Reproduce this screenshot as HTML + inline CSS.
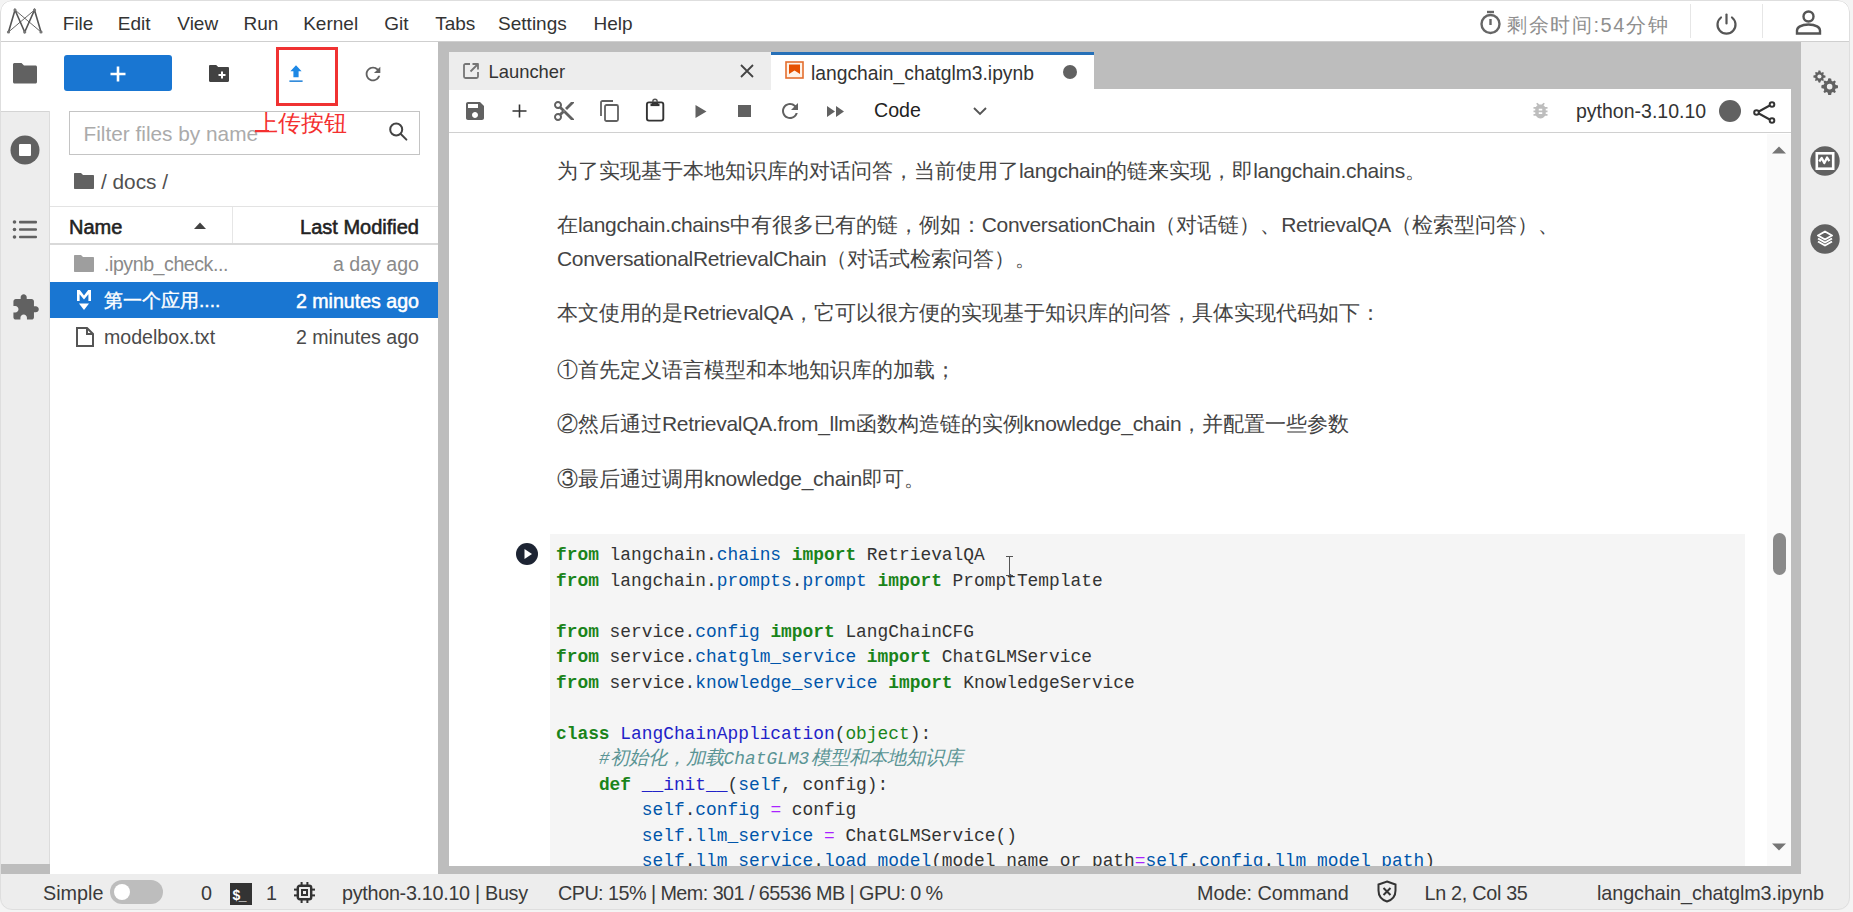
<!DOCTYPE html>
<html><head><meta charset="utf-8">
<style>
*{box-sizing:border-box;margin:0;padding:0}
html,body{width:1853px;height:912px;overflow:hidden;background:#f4f4f4;font-family:"Liberation Sans",sans-serif;color:#333}
.a{position:absolute}
#win{position:absolute;left:0;top:0;width:1850px;height:910px;background:#ededed;border-radius:12px;overflow:hidden}
#frame{position:absolute;left:0;top:0;width:1850px;height:910px;border:1px solid #dedede;border-radius:12px;pointer-events:none}
#top{left:0;top:0;width:1851px;height:42px;background:#fff;border-bottom:1px solid #cfcfcf}
.menu{top:2px;height:42px;line-height:44px;font-size:19px;color:#333}
#lbar{left:0;top:42px;width:50px;height:832px;background:#ededed}
#fb{left:50px;top:42px;width:388px;height:832px;background:#fff}
#split1{left:438px;top:42px;width:11px;height:832px;background:#bdbdbd}
#tabbar{left:449px;top:42px;width:1342px;height:47px;background:#bdbdbd}
#nbtool{left:449px;top:89px;width:1342px;height:44px;background:#fff;border-bottom:1.5px solid #d0d0d0}
#nb{left:449px;top:133px;width:1342px;height:733px;background:#fff}
#split2{left:1791px;top:42px;width:10px;height:832px;background:#bdbdbd}
#botgray{left:438px;top:866px;width:1363px;height:8px;background:#bdbdbd}
#rbar{left:1801px;top:42px;width:50px;height:832px;background:#ededed}
#status{left:0;top:874px;width:1851px;height:37px;background:#ededed}
.st{top:873.5px;height:37px;line-height:38px;font-size:19.8px;color:#3a3a3a}

.l{letter-spacing:-0.3px}
.md{position:absolute;left:557px;font-size:21px;color:#444;white-space:nowrap;height:34px;line-height:34px}
#code{position:absolute;left:550px;top:534px;width:1195px;height:332px;background:#f5f5f5;overflow:hidden}
#code pre{position:absolute;left:6px;top:9px;font-family:"Liberation Mono",monospace;font-size:17.88px;line-height:25.5px;color:#333}
.k{color:#1a841a;font-weight:bold}
.m{color:#0055aa}
.d{color:#2222c8}
.b{color:#1a841a}
.v{color:#0055aa}
.o{color:#aa22ff}
.c{color:#5a9494;font-style:italic}
.cj{font-size:19.3px;line-height:10px}
</style></head><body>
<div id="win">
<div id="top" class="a"></div>
<div id="lbar" class="a"></div>
<div id="fb" class="a"></div>
<div id="split1" class="a"></div>
<div id="tabbar" class="a"></div>
<div id="nbtool" class="a"></div>
<div id="nb" class="a"></div>
<div id="split2" class="a"></div>
<div id="botgray" class="a"></div>
<div id="rbar" class="a"></div>
<div id="status" class="a"></div>

<!-- menu -->
<div class="a menu" style="left:62.8px">File</div>
<div class="a menu" style="left:117.8px">Edit</div>
<div class="a menu" style="left:177.3px">View</div>
<div class="a menu" style="left:243.5px">Run</div>
<div class="a menu" style="left:303.2px">Kernel</div>
<div class="a menu" style="left:384.3px">Git</div>
<div class="a menu" style="left:435.2px">Tabs</div>
<div class="a menu" style="left:498.1px">Settings</div>
<div class="a menu" style="left:593.5px">Help</div>


<!-- logo -->
<svg class="a" style="left:5px;top:7px" width="40" height="30" viewBox="0 0 40 30">
 <g fill="none" stroke="#555" stroke-linecap="round">
  <path d="M3.5 25 L10 3 L19.7 25 L29.5 3 L36 25" stroke-width="1.6"/>
  <path d="M3.5 25 L29.5 3 M10 3 L36 25" stroke-width="0.9"/>
 </g>
 <g fill="#777"><circle cx="3.5" cy="25" r="1.6"/><circle cx="10" cy="3" r="1.6"/><circle cx="19.7" cy="25" r="1.6"/><circle cx="29.5" cy="3" r="1.6"/><circle cx="36" cy="25" r="1.6"/></g>
</svg>
<!-- top right -->
<svg class="a" style="left:1479px;top:10px" width="23" height="25" viewBox="0 0 23 25"><g fill="none" stroke="#666" stroke-width="2.4"><circle cx="11.5" cy="14" r="9"/><path d="M11.5 9v6"/><path d="M8 2h7"/></g></svg>
<div class="a" style="left:1507px;top:5.5px;height:36px;line-height:38px;font-size:20px;color:#8f8f8f;letter-spacing:1.6px">剩余时间:54分钟</div>
<div class="a" style="left:1690px;top:4px;width:1px;height:34px;background:#e6e6e6"></div>
<svg class="a" style="left:1715px;top:13px" width="23" height="23" viewBox="0 0 23 23"><g fill="none" stroke="#555" stroke-width="2.2" stroke-linecap="round"><path d="M6 4.5A9 9 0 1 0 17 4.5"/><path d="M11.5 1.5v9"/></g></svg>
<div class="a" style="left:1762px;top:4px;width:1px;height:34px;background:#e6e6e6"></div>
<svg class="a" style="left:1795px;top:10px" width="27" height="25" viewBox="0 0 27 25"><g fill="none" stroke="#555" stroke-width="2.4"><circle cx="13.5" cy="6.5" r="5"/><path d="M2 23.5v-3c0-3 4-6 11.5-6s11.5 3 11.5 6v3z"/></g></svg>
<!-- left activity bar -->
<div class="a" style="left:0;top:42px;width:50px;height:69px;background:#fff"></div>
<div class="a" style="left:0;top:111px;width:50px;height:1px;background:#d4d4d4"></div>
<div class="a" style="left:49px;top:111px;width:1px;height:753px;background:#dcdcdc"></div>
<svg class="a" style="left:12px;top:62px" width="26" height="22" viewBox="0 0 26 22"><path fill="#616161" d="M1 2.5C1 1.7 1.7 1 2.5 1h7l2.5 2.5h11.5c.8 0 1.5.7 1.5 1.5v15c0 .8-.7 1.5-1.5 1.5h-21C1.7 21.5 1 20.8 1 20z"/></svg>
<svg class="a" style="left:10px;top:135px" width="30" height="30" viewBox="0 0 30 30"><circle cx="15" cy="15" r="14.5" fill="#616161"/><rect x="9" y="9" width="12" height="12" rx="1" fill="#fff"/></svg>
<svg class="a" style="left:12px;top:219px" width="26" height="21" viewBox="0 0 26 21"><g fill="#616161"><circle cx="2.5" cy="3" r="1.8"/><circle cx="2.5" cy="10.5" r="1.8"/><circle cx="2.5" cy="18" r="1.8"/><rect x="7" y="1.8" width="18" height="2.6" rx="1"/><rect x="7" y="9.2" width="18" height="2.6" rx="1"/><rect x="7" y="16.7" width="18" height="2.6" rx="1"/></g></svg>
<svg class="a" style="left:11px;top:293px" width="29" height="29" viewBox="0 0 24 24"><path fill="#616161" d="M20.5 11H19V7c0-1.1-.9-2-2-2h-4V3.5C13 2.12 11.88 1 10.5 1S8 2.12 8 3.5V5H4c-1.1 0-1.99.9-1.99 2v3.8H3.5c1.49 0 2.7 1.21 2.7 2.7s-1.21 2.7-2.7 2.7H2V20c0 1.1.9 2 2 2h3.8v-1.5c0-1.49 1.21-2.7 2.7-2.7 1.49 0 2.7 1.21 2.7 2.7V22H17c1.1 0 2-.9 2-2v-4h1.5c1.38 0 2.5-1.12 2.5-2.5S21.88 11 20.5 11z"/></svg>

<!-- file browser -->
<div class="a" style="left:64px;top:55px;width:108px;height:36px;background:#1976d2;border-radius:3px"></div>
<svg class="a" style="left:109px;top:65px" width="18" height="18" viewBox="0 0 18 18"><path d="M9 1.5v15M1.5 9h15" stroke="#fff" stroke-width="2.6"/></svg>
<svg class="a" style="left:208px;top:64px" width="22" height="19" viewBox="0 0 22 19"><path fill="#424242" d="M1 2.2C1 1.5 1.5 1 2.2 1h6l2 2h9.6c.7 0 1.2.5 1.2 1.2v12.6c0 .7-.5 1.2-1.2 1.2H2.2C1.5 18 1 17.5 1 16.8z"/><path d="M14 7.5v7M10.5 11h7" stroke="#fff" stroke-width="2"/></svg>
<svg class="a" style="left:287px;top:63px" width="18" height="20" viewBox="0 0 18 20"><path fill="#1e88e5" d="M9 2.2 L14.6 8.2 H11.6 V14.2 H6.4 V8.2 H3.4z"/><rect x="2.4" y="17.4" width="13.2" height="1.5" fill="#1e80d8"/></svg>
<svg class="a" style="left:362px;top:63px" width="22" height="22" viewBox="0 0 24 24"><path fill="#616161" d="M17.65 6.35A7.958 7.958 0 0 0 12 4c-4.42 0-7.99 3.58-7.99 8s3.57 8 7.99 8c3.73 0 6.84-2.55 7.73-6h-2.08A5.99 5.99 0 0 1 12 18c-3.31 0-6-2.69-6-6s2.69-6 6-6c1.66 0 3.14.69 4.22 1.78L13 11h7V4l-2.35 2.35z"/></svg>
<div class="a" style="left:275.8px;top:47px;width:62px;height:59px;border:3px solid #f03232"></div>
<div class="a" style="left:69px;top:110.5px;width:350.5px;height:44.5px;border:1.5px solid #c4c4c4;background:#fff"></div>
<div class="a" style="left:83.5px;top:113px;height:40px;line-height:42px;font-size:20.8px;color:#ababab">Filter files by name</div>
<svg class="a" style="left:387px;top:120px" width="24" height="24" viewBox="0 0 24 24"><g fill="none" stroke="#444" stroke-width="2" stroke-linecap="round"><circle cx="9.2" cy="9.5" r="6"/><path d="M13.8 14l5.6 5.6"/></g></svg>
<div class="a" style="left:255.3px;top:106.5px;height:34px;line-height:34px;font-size:22.5px;color:#f43030">上传按钮</div>
<div class="a" style="left:255px;top:129.5px;width:14px;height:2px;background:#f43030"></div>
<svg class="a" style="left:73px;top:172px" width="22" height="18" viewBox="0 0 22 18"><path fill="#616161" d="M1 2C1 1.4 1.4 1 2 1h6l2 2h10c.6 0 1 .4 1 1v12c0 .6-.4 1-1 1H2c-.6 0-1-.4-1-1z"/></svg>
<div class="a" style="left:101px;top:164px;height:34px;line-height:36px;font-size:20.8px;color:#505050">/ docs /</div>
<div class="a" style="left:50px;top:206px;width:388px;height:1px;background:#e3e3e3"></div>
<div class="a" style="left:50px;top:243px;width:388px;height:2px;background:#d9d9d9"></div>
<div class="a" style="left:232px;top:207px;width:1px;height:36px;background:#e6e6e6"></div>
<div class="a" style="left:69px;top:208px;height:36px;line-height:38px;font-size:20px;color:#222;-webkit-text-stroke:0.55px #222;letter-spacing:0px">Name</div>
<svg class="a" style="left:193px;top:221px" width="14" height="9" viewBox="0 0 14 9"><path d="M1 8L7 1.5 13 8z" fill="#424242"/></svg>
<div class="a" style="left:238px;top:208px;width:181px;height:36px;line-height:38px;font-size:20px;color:#222;-webkit-text-stroke:0.55px #222;text-align:right;letter-spacing:0px">Last Modified</div>

<svg class="a" style="left:73px;top:254px" width="22" height="19" viewBox="0 0 22 19"><path fill="#9e9e9e" d="M1 2C1 1.4 1.4 1 2 1h6l2 2h10c.6 0 1 .4 1 1v13c0 .6-.4 1-1 1H2c-.6 0-1-.4-1-1z"/></svg>
<div class="a" style="left:104px;top:245px;height:37px;line-height:39px;font-size:19.6px;color:#8a8a8a;letter-spacing:-0.45px">.ipynb_check...</div>
<div class="a" style="left:238px;top:245px;width:181px;height:37px;line-height:39px;font-size:19.6px;color:#8a8a8a;text-align:right">a day ago</div>

<div class="a" style="left:50px;top:282px;width:388px;height:36px;background:#1976d2"></div>
<svg class="a" style="left:76px;top:289px" width="16" height="23" viewBox="0 0 16 23"><path fill="#fff" d="M1 1h2.8l4.2 5.5L12.2 1H15v11h-2.6V5.2L8 10.5 3.6 5.2V12H1z"/><path fill="#fff" d="M3 14.5h10L8 21z"/></svg>
<div class="a" style="left:104px;top:282px;height:36px;line-height:38px;font-size:19.2px;color:#fff;-webkit-text-stroke:0.4px #fff">第一个应用....</div>
<div class="a" style="left:238px;top:282px;width:181px;height:36px;line-height:38px;font-size:19.6px;color:#fff;text-align:right;-webkit-text-stroke:0.5px #fff">2 minutes ago</div>

<svg class="a" style="left:75px;top:326px" width="20" height="22" viewBox="0 0 20 22"><path fill="none" stroke="#555" stroke-width="2" d="M2 2h10l6 6v12H2z"/><path fill="none" stroke="#555" stroke-width="2" d="M12 2v6h6"/></svg>
<div class="a" style="left:104px;top:318px;height:37px;line-height:39px;font-size:19.6px;color:#4a4a4a">modelbox.txt</div>
<div class="a" style="left:238px;top:318px;width:181px;height:37px;line-height:39px;font-size:19.6px;color:#4a4a4a;text-align:right">2 minutes ago</div>
<div class="a" style="left:0;top:864px;width:50px;height:10px;background:#bdbdbd"></div>


<!-- markdown -->
<div class="md" style="top:154px">为了实现基于本地知识库的对话问答，当前使用了<span class="l">langchain</span>的链来实现，即<span class="l">langchain.chains</span>。</div>
<div class="md" style="top:208px">在<span class="l">langchain.chains</span>中有很多已有的链，例如：<span class="l">ConversationChain</span>（对话链）、<span class="l">RetrievalQA</span>（检索型问答）、</div>
<div class="md" style="top:242px"><span class="l">ConversationalRetrievalChain</span>（对话式检索问答）。</div>
<div class="md" style="top:296px">本文使用的是<span class="l">RetrievalQA</span>，它可以很方便的实现基于知识库的问答，具体实现代码如下：</div>
<div class="md" style="top:352.5px">①首先定义语言模型和本地知识库的加载；</div>
<div class="md" style="top:406.5px">②然后通过<span class="l">RetrievalQA.from_llm</span>函数构造链的实例<span class="l">knowledge_chain</span>，并配置一些参数</div>
<div class="md" style="top:462px">③最后通过调用<span class="l">knowledge_chain</span>即可。</div>
<!-- code cell -->
<svg class="a" style="left:515px;top:542px" width="24" height="24" viewBox="0 0 24 24"><circle cx="12" cy="12" r="11" fill="#1d2433"/><path d="M9.5 7v10l7.5-5z" fill="#fff"/></svg>
<div id="code"><pre><span class="k">from</span> langchain.<span class="m">chains</span> <span class="k">import</span> RetrievalQA
<span class="k">from</span> langchain.<span class="m">prompts</span>.<span class="m">prompt</span> <span class="k">import</span> PromptTemplate

<span class="k">from</span> service.<span class="m">config</span> <span class="k">import</span> LangChainCFG
<span class="k">from</span> service.<span class="m">chatglm_service</span> <span class="k">import</span> ChatGLMService
<span class="k">from</span> service.<span class="m">knowledge_service</span> <span class="k">import</span> KnowledgeService

<span class="k">class</span> <span class="d">LangChainApplication</span>(<span class="b">object</span>):
    <span class="c">#<span class="cj">初始化，加载</span>ChatGLM3<span class="cj" style="margin-left:2px">模型和本地知识库</span></span>
    <span class="k">def</span> <span class="d">__init__</span>(<span class="v">self</span>, config):
        <span class="v">self</span>.<span class="v">config</span> <span class="o">=</span> config
        <span class="v">self</span>.<span class="v">llm_service</span> <span class="o">=</span> ChatGLMService()
        <span class="v">self</span>.<span class="v">llm_service</span>.<span class="v">load_model</span>(model_name_or_path<span class="o">=</span><span class="v">self</span>.<span class="v">config</span>.<span class="v">llm_model_path</span>)
</pre></div>
<div class="a" style="left:1009px;top:556px;width:1px;height:19px;background:#555"></div>
<div class="a" style="left:1006px;top:556px;width:7px;height:1px;background:#555"></div>
<div class="a" style="left:1006px;top:575px;width:7px;height:1px;background:#555"></div>
<!-- nb scrollbar -->
<div class="a" style="left:1767px;top:134px;width:24px;height:732px;background:#fafafa"></div>
<svg class="a" style="left:1771px;top:145px" width="16" height="10" viewBox="0 0 16 10"><path d="M1 8.5L8 1.5l7 7z" fill="#757575"/></svg>
<div class="a" style="left:1773px;top:533px;width:13px;height:42px;border-radius:7px;background:#8a8a8a"></div>
<svg class="a" style="left:1771px;top:842px" width="16" height="10" viewBox="0 0 16 10"><path d="M1 1.5L8 8.5l7-7z" fill="#757575"/></svg>
<!-- tabs -->
<div class="a" style="left:449px;top:52px;width:322px;height:38px;background:#ededed"></div>
<svg class="a" style="left:462px;top:62px" width="18" height="18" viewBox="0 0 18 18"><g fill="none" stroke="#757575" stroke-width="1.8" stroke-linejoin="round"><path d="M8 2H3.5C2.7 2 2 2.7 2 3.5v11c0 .8.7 1.5 1.5 1.5h11c.8 0 1.5-.7 1.5-1.5V10"/><path d="M10.5 2H16v5.5M16 2L8.5 9.5"/></g></svg>
<div class="a" style="left:488.5px;top:52px;height:37px;line-height:39px;font-size:18.4px;color:#333">Launcher</div>
<svg class="a" style="left:739px;top:62.5px" width="16" height="16" viewBox="0 0 16 16"><path d="M2 2l12 12M14 2L2 14" stroke="#444" stroke-width="1.8"/></svg>
<div class="a" style="left:771px;top:52px;width:323px;height:37px;background:#fff;border-top:3px solid #2670b8"></div>
<svg class="a" style="left:785px;top:61px" width="19" height="18" viewBox="0 0 19 18"><rect x="1" y="1" width="17" height="16" fill="#fff3e8" stroke="#e46e2e" stroke-width="1.6"/><path d="M4 3.5h11v9.5l-5.5-3.6L4 13z" fill="#e65100"/></svg>
<div class="a" style="left:811px;top:55px;height:35px;line-height:37px;font-size:19.3px;color:#333">langchain_chatglm3.ipynb</div>
<div class="a" style="left:1063px;top:65px;width:14px;height:14px;border-radius:50%;background:#616161"></div>

<!-- notebook toolbar -->
<svg class="a" style="left:463px;top:99px" width="24" height="24" viewBox="0 0 24 24"><path fill="#616161" d="M17 3H5c-1.11 0-2 .9-2 2v14c0 1.1.89 2 2 2h14c1.1 0 2-.9 2-2V7l-4-4zm-5 16c-1.66 0-3-1.34-3-3s1.34-3 3-3 3 1.34 3 3-1.34 3-3 3zm3-10H5V5h10v4z"/></svg>
<svg class="a" style="left:511px;top:102px" width="18" height="18" viewBox="0 0 18 18"><path d="M8.5 2.5v13M1.5 9h14" stroke="#333" stroke-width="1.6"/></svg>
<svg class="a" style="left:552px;top:99px" width="24" height="24" viewBox="0 0 24 24"><path fill="#616161" d="M9.64 7.64c.23-.5.36-1.05.36-1.64 0-2.21-1.79-4-4-4S2 3.79 2 6s1.79 4 4 4c.59 0 1.14-.13 1.64-.36L10 12l-2.36 2.36C7.14 14.13 6.59 14 6 14c-2.21 0-4 1.79-4 4s1.79 4 4 4 4-1.79 4-4c0-.59-.13-1.14-.36-1.64L12 14l7 7h3v-1L9.64 7.64zM6 8c-1.1 0-2-.89-2-2s.9-2 2-2 2 .89 2 2-.9 2-2 2zm0 12c-1.1 0-2-.89-2-2s.9-2 2-2 2 .89 2 2-.9 2-2 2zm6-7.5c-.28 0-.5-.22-.5-.5s.22-.5.5-.5.5.22.5.5-.22.5-.5.5zM19 3l-6 6 2 2 7-7V3z"/></svg>
<svg class="a" style="left:599px;top:99px" width="23" height="24" viewBox="0 0 23 24"><g fill="none" stroke="#616161" stroke-width="1.8"><path d="M2 17V3.5C2 2.7 2.7 2 3.5 2H14"/><rect x="6" y="6" width="13" height="16" rx="1.5"/></g></svg>
<svg class="a" style="left:644px;top:97px" width="22" height="25" viewBox="0 0 22 25"><rect x="2.9" y="5.4" width="16.4" height="18.2" rx="2" fill="none" stroke="#333" stroke-width="1.9"/><rect x="6.5" y="6.5" width="9" height="2.6" fill="#333"/><circle cx="11" cy="4.5" r="2.2" fill="none" stroke="#555" stroke-width="1.4"/><rect x="8" y="5.2" width="6" height="2" fill="#333"/></svg>
<svg class="a" style="left:694px;top:104px" width="14" height="15" viewBox="0 0 14 15"><path d="M1.5 1v13l11-6.5z" fill="#616161"/></svg>
<div class="a" style="left:738px;top:105px;width:13px;height:12px;background:#616161"></div>
<svg class="a" style="left:778px;top:99px" width="24" height="24" viewBox="0 0 24 24"><path fill="#616161" d="M17.65 6.35A7.958 7.958 0 0 0 12 4c-4.42 0-7.99 3.58-7.99 8s3.57 8 7.99 8c3.73 0 6.84-2.55 7.73-6h-2.08A5.99 5.99 0 0 1 12 18c-3.31 0-6-2.69-6-6s2.69-6 6-6c1.66 0 3.14.69 4.22 1.78L13 11h7V4l-2.35 2.35z"/></svg>
<svg class="a" style="left:826px;top:105px" width="20" height="13" viewBox="0 0 20 13"><path d="M1 1v11l8-5.5zM10 1v11l8-5.5z" fill="#616161"/></svg>
<div class="a" style="left:874px;top:90.6px;height:38px;line-height:38px;font-size:19.6px;color:#222">Code</div>
<svg class="a" style="left:972px;top:105px" width="16" height="12" viewBox="0 0 16 12"><path d="M2 3l6 6 6-6" fill="none" stroke="#555" stroke-width="1.9"/></svg>
<svg class="a" style="left:1530px;top:100px" width="21" height="21" viewBox="0 0 24 24"><path fill="#bdbdbd" d="M20 8h-2.81c-.45-.78-1.07-1.45-1.82-1.96L17 4.41 15.59 3l-2.17 2.17C12.96 5.06 12.49 5 12 5c-.49 0-.96.06-1.41.17L8.410 3 7 4.41l1.62 1.63C7.88 6.55 7.26 7.22 6.81 8H4v2h2.09c-.05.33-.09.66-.09 1v1H4v2h2v1c0 .34.04.67.09 1H4v2h2.81c1.04 1.79 2.97 3 5.19 3s4.15-1.21 5.19-3H20v-2h-2.09c.05-.33.09-.66.09-1v-1h2v-2h-2v-1c0-.34-.04-.67-.09-1H20V8zm-6 8h-4v-2h4v2zm0-4h-4v-2h4v2z"/></svg>
<div class="a" style="left:1576px;top:92px;height:38px;line-height:38px;font-size:19.5px;color:#333">python-3.10.10</div>
<div class="a" style="left:1719px;top:100px;width:22px;height:22px;border-radius:50%;background:#616161"></div>
<svg class="a" style="left:1752px;top:100px" width="25" height="25" viewBox="0 0 25 25"><g fill="none" stroke="#333" stroke-width="2"><path d="M5 12.5L19.5 4.5M5 12.5l14.5 8"/><circle cx="4.5" cy="12.5" r="2.3" fill="#fff"/><circle cx="20" cy="4.5" r="2.3" fill="#fff"/><circle cx="20" cy="20.5" r="2.3" fill="#fff"/></g></svg>

<!-- right bar -->
<svg class="a" style="left:1811.5px;top:68.5px" width="26" height="26" viewBox="0 0 28 28"><g fill="#616161"><path d="M8 1.5l1.2.3.2 1.6 1 .6 1.5-.7.9.9-.7 1.5.6 1 1.6.2.3 1.2-.3 1.2-1.6.2-.6 1 .7 1.5-.9.9-1.5-.7-1 .6-.2 1.6-1.2.3-1.2-.3-.2-1.6-1-.6-1.5.7-.9-.9.7-1.5-.6-1-1.6-.2L1.5 8l.3-1.2 1.6-.2.6-1-.7-1.5.9-.9 1.5.7 1-.6.2-1.6z"/><path d="M19 10l1.7.4.3 2.2 1.4.8 2-1 1.3 1.3-1 2 .8 1.4 2.2.3.4 1.7-.4 1.7-2.2.3-.8 1.4 1 2-1.3 1.3-2-1-1.4.8-.3 2.2-1.7.4-1.7-.4-.3-2.2-1.4-.8-2 1-1.3-1.3 1-2-.8-1.4-2.2-.3L10 19l.4-1.7 2.2-.3.8-1.4-1-2 1.3-1.3 2 1 1.4-.8.3-2.2z"/></g><circle cx="8" cy="8" r="2.2" fill="#ededed"/><circle cx="19" cy="19" r="3" fill="#ededed"/></svg>
<svg class="a" style="left:1810px;top:146px" width="30" height="30" viewBox="0 0 30 30"><circle cx="15" cy="15" r="14.7" fill="#616161"/><rect x="6.8" y="7.3" width="16.4" height="15.4" fill="none" stroke="#fff" stroke-width="2.6"/><path d="M9.3 15.5l2.4-3.6 2.6 5.2 2.8-5.6 2.2 3.6" fill="none" stroke="#fff" stroke-width="2.3" stroke-linejoin="round"/></svg>
<svg class="a" style="left:1810px;top:224px" width="30" height="30" viewBox="0 0 30 30"><circle cx="15" cy="15" r="14.7" fill="#616161"/><g fill="none" stroke="#fff" stroke-width="2" stroke-linejoin="round"><path d="M15 7.5l7 4-7 4-7-4z"/><path d="M8 14.5l7 4 7-4"/><path d="M8 17.5l7 4 7-4"/></g></svg>

<!-- status bar -->
<div class="a st" style="left:43px">Simple</div>
<div class="a" style="left:110px;top:880px;width:53px;height:24px;border-radius:12px;background:#bdbdbd"></div>
<div class="a" style="left:114px;top:884px;width:16px;height:16px;border-radius:50%;background:#fff"></div>
<div class="a st" style="left:201px">0</div>
<div class="a" style="left:230px;top:883px;width:22px;height:22px;background:#333"></div>
<div class="a" style="left:232.5px;top:883px;height:22px;line-height:24px;font-size:14px;font-weight:bold;color:#fff;letter-spacing:-1.5px">$_</div>
<div class="a st" style="left:266px">1</div>
<svg class="a" style="left:293px;top:881px" width="23" height="23" viewBox="0 0 23 23"><rect x="4.8" y="4.8" width="13.4" height="13.4" rx="2" fill="none" stroke="#333" stroke-width="2.4"/><rect x="9" y="9" width="5" height="5" fill="none" stroke="#333" stroke-width="2"/><g fill="#333"><rect x="7.6" y="1" width="2" height="3.5"/><rect x="13.4" y="1" width="2" height="3.5"/><rect x="7.6" y="18.5" width="2" height="3.5"/><rect x="13.4" y="18.5" width="2" height="3.5"/><rect x="1" y="7.6" width="3.5" height="2"/><rect x="1" y="13.4" width="3.5" height="2"/><rect x="18.5" y="7.6" width="3.5" height="2"/><rect x="18.5" y="13.4" width="3.5" height="2"/></g></svg>
<div class="a st" style="left:342px;letter-spacing:-0.3px">python-3.10.10 | Busy</div>
<div class="a st" style="left:558px;letter-spacing:-0.55px">CPU: 15% | Mem: 301 / 65536 MB | GPU: 0 %</div>
<div class="a st" style="left:1197px">Mode: Command</div>
<svg class="a" style="left:1376px;top:880px" width="22" height="23" viewBox="0 0 22 23"><path d="M11 1.5l8.5 3v6c0 5.5-3.7 9.5-8.5 11-4.8-1.5-8.5-5.5-8.5-11v-6z" fill="none" stroke="#333" stroke-width="2"/><path d="M7.5 8l7 7M14.5 8l-7 7" stroke="#333" stroke-width="2"/></svg>
<div class="a st" style="left:1424.5px;letter-spacing:-0.3px">Ln 2, Col 35</div>
<div class="a st" style="left:1597px;letter-spacing:-0.08px">langchain_chatglm3.ipynb</div>
<div id="frame"></div>
</div>
</body></html>
